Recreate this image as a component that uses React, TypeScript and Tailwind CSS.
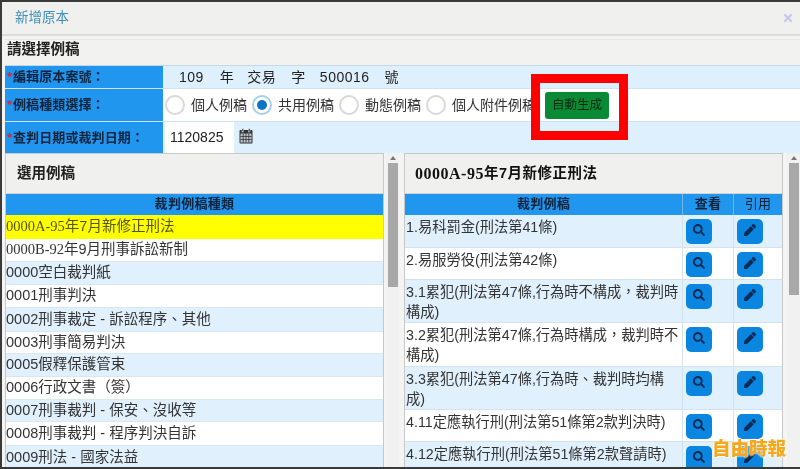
import { FaPen, FaSearch, FaTimes } from "react-icons/fa";

const sans = "font-['Liberation_Sans','Noto_Sans_CJK_TC',sans-serif]";
const serif = "font-['Liberation_Serif','Noto_Sans_CJK_TC',serif]";

const leftRows = [
  { code: "0000B-92", name: "年9月刑事訴訟新制", h: "h-[23px]", bg: "bg-white", isSerif: true },
  { code: "0000", name: "空白裁判紙", h: "h-[23px]", bg: "bg-[#e0f0fd]" },
  { code: "0001", name: "刑事判決", h: "h-[23px]", bg: "bg-white" },
  { code: "0002", name: "刑事裁定 - 訴訟程序、其他", h: "h-[24px]", bg: "bg-[#e0f0fd]" },
  { code: "0003", name: "刑事簡易判決", h: "h-[22px]", bg: "bg-white" },
  { code: "0005", name: "假釋保護管束", h: "h-[23px]", bg: "bg-[#e0f0fd]" },
  { code: "0006", name: "行政文書（簽）", h: "h-[23px]", bg: "bg-white" },
  { code: "0007", name: "刑事裁判 - 保安、沒收等", h: "h-[22px]", bg: "bg-[#e0f0fd]" },
  { code: "0008", name: "刑事裁判 - 程序判決自訴", h: "h-[24px]", bg: "bg-white" },
  { code: "0009", name: "刑法 - 國家法益", h: "h-[24px]", bg: "bg-[#e0f0fd]" },
];

const rightRows = [
  { text: "1.易科罰金(刑法第41條)", h: "h-[33px]", bg: "bg-[#e0f0fd]" },
  { text: "2.易服勞役(刑法第42條)", h: "h-[32px]", bg: "bg-white" },
  { text: "3.1累犯(刑法第47條,行為時不構成，裁判時構成)", h: "h-[43px]", bg: "bg-[#e0f0fd]" },
  { text: "3.2累犯(刑法第47條,行為時構成，裁判時不構成)", h: "h-[44px]", bg: "bg-white" },
  { text: "3.3累犯(刑法第47條,行為時、裁判時均構成)", h: "h-[43px]", bg: "bg-[#e0f0fd]" },
  { text: "4.11定應執行刑(刑法第51條第2款判決時)", h: "h-[32px]", bg: "bg-white" },
  { text: "4.12定應執行刑(刑法第51條第2款聲請時)", h: "h-[32px]", bg: "bg-[#e0f0fd]" },
];

function Radio({ label, checked }: { label: string; checked?: boolean }) {
  return (
    <label className="flex items-center gap-[6px]">
      <span
        className={`flex h-[20px] w-[20px] shrink-0 items-center justify-center rounded-full border-2 bg-white ${
          checked ? "border-[#a9cfe8]" : "border-[#d8d8d4]"
        }`}
      >
        {checked && <span className="h-[10px] w-[10px] rounded-full bg-[#0a74c4]" />}
      </span>
      <span className="whitespace-nowrap">{label}</span>
    </label>
  );
}

function Label({ text }: { text: string }) {
  return (
    <div className="flex w-[158px] shrink-0 items-center whitespace-nowrap bg-[#2196ee] pl-[2px] text-[13px] font-bold tracking-[0.1px] text-[#10233a]">
      <span className="w-[6px] text-[#e0203c]">*</span>
      {text}
    </div>
  );
}

function Scrollbar({ thumb }: { thumb: string }) {
  return (
    <div className="flex h-full w-[13px] shrink-0 flex-col items-center bg-[#f1f1f1] pt-[1px]">
      <span className="mt-[2px] h-0 w-0 border-x-[3px] border-b-[4px] border-x-transparent border-b-[#777]" />
      <div className={`mt-[3px] w-[10px] bg-[#a8a8a8] ${thumb}`} />
    </div>
  );
}

function IconButton({ children }: { children: React.ReactNode }) {
  return (
    <span className="flex h-[25px] w-[26px] items-center justify-center rounded-[5px] bg-[#0a86e0] pb-[3px] text-[12px] text-[#0b2a55]">
      {children}
    </span>
  );
}

function CalendarIcon() {
  return (
    <svg viewBox="0 0 14 16" className="ml-[5px] mt-[6px] h-[16px] w-[14px]" fill="none">
      <rect x="0.5" y="2" width="13" height="13.5" rx="1" fill="#333" />
      <rect x="3" y="0.5" width="1.6" height="3.5" fill="#333" stroke="#def0fd" strokeWidth="0.5" />
      <rect x="9.4" y="0.5" width="1.6" height="3.5" fill="#333" stroke="#def0fd" strokeWidth="0.5" />
      <path d="M1.5 5.5h11v9h-11z" fill="#b9c3ca" />
      <path d="M1.5 8.5h11M1.5 11.5h11M4.2 5.5v9M7 5.5v9M9.8 5.5v9" stroke="#333" strokeWidth="0.8" />
    </svg>
  );
}

export default function App() {
  return (
    <div className={`relative flex h-[469px] w-[800px] flex-col overflow-hidden border-t-2 border-b-2 border-l-2 border-[#3a3a3a] bg-[#f4f4f2] ${sans} blur-[0.4px]`}>
      {/* dialog title */}
      <div className="flex h-[34px] shrink-0 items-center justify-between border-b-2 border-[#dcdcd8] bg-[#f0f0ee] pr-[6px] pl-[13px]">
        <span className="text-[13.5px] text-[#3f8fb8]">新增原本</span>
        <FaTimes className="text-[12px] text-[#c9c6ee]" />
      </div>

      <div className="ml-[3px] mt-[3px] flex h-[26px] shrink-0 items-center border-t border-[#e6e6e2] bg-[#f2f2f0] pb-[6px] pl-[2px] text-[14.5px] font-bold text-[#222]">
        請選擇例稿
      </div>

      {/* form rows */}
      <div className="ml-[3px] shrink-0 text-[#333]">
        <div className="flex h-[23px] border-t border-[#c4d8e6] bg-[#def0fd]">
          <Label text="編輯原本案號：" />
          <div className="flex items-center pl-[16px] text-[14px] tracking-[0.5px] text-[#222]">
            <span>109</span>
            <span className="ml-[16px]">年</span>
            <span className="ml-[13px]">交易</span>
            <span className="ml-[15px]">字</span>
            <span className="ml-[14px]">500016</span>
            <span className="ml-[15px]">號</span>
          </div>
        </div>
        <div className="flex h-[34px] border-y border-[#cfe3f2] bg-white">
          <Label text="例稿種類選擇：" />
          <div className="flex items-center gap-[5px] pl-[2px] text-[14px]">
            <Radio label="個人例稿" />
            <Radio label="共用例稿" checked />
            <Radio label="動態例稿" />
            <Radio label="個人附件例稿" />
            <button className="ml-[4px] flex h-[27px] w-[64px] items-center justify-center rounded-[3px] bg-[#0a8a34] text-[12.5px] text-[#0a2a14]">
              自動生成
            </button>
          </div>
        </div>
        <div className="flex h-[31px] bg-[#def0fd]">
          <Label text="查判日期或裁判日期：" />
          <div className="ml-[2px] h-full w-[69px] bg-white pl-[5px] pt-[5px] text-[14px] text-[#222]">1120825</div>
          <CalendarIcon />
        </div>
      </div>

      {/* two panels */}
      <div className="flex min-h-0 flex-1 bg-[#f4f4f2] pl-[3px]">
        <div className="flex w-[379px] shrink-0 flex-col overflow-hidden border-x border-t border-[#c8c8c8]">
          <div className="flex h-[40px] shrink-0 items-center border-b border-[#d4d4d4] bg-[#f0f0ee] pl-[11px] text-[14.5px] font-bold text-[#222]">
            選用例稿
          </div>
          <div className="flex h-[21px] shrink-0 items-center justify-center bg-[#2196ee] pb-[2px] text-[13px] font-bold tracking-[0.3px] text-[#10233a]">
            裁判例稿種類
          </div>
          <div className="flex h-[24px] shrink-0 items-center bg-[#ffff00] text-[14.5px] text-[#555510]">
            <span className={serif}>0000A-95</span>年7月新修正刑法
          </div>
          {leftRows.map((r) => (
            <div key={r.code + r.name} className={`flex shrink-0 items-center border-b border-[#dce6ee] text-[14.5px] text-[#333] ${r.h} ${r.bg}`}>
              <span className={r.isSerif ? serif : ""}>{r.code}</span>
              {r.name}
            </div>
          ))}
        </div>
        <div className="ml-[2px]">
          <Scrollbar thumb="h-[124px]" />
        </div>

        <div className="ml-[5px] flex w-[379px] shrink-0 flex-col overflow-hidden border-x border-t border-[#c8c8c8]">
          <div className="flex h-[40px] shrink-0 items-center border-b border-[#d4d4d4] bg-[#f0f0ee] pl-[10px] text-[14.5px] font-bold tracking-[0.5px] text-[#111]">
            <span className={`${serif} text-[16px]`}>0000A-95</span>年7月新修正刑法
          </div>
          <div className="flex h-[21px] shrink-0 bg-[#2196ee] text-[13px] font-bold tracking-[0.3px] text-[#10233a]">
            <div className="flex w-[277px] items-center justify-center pb-[2px]">裁判例稿</div>
            <div className="flex w-[51px] items-center justify-center border-l border-[#72b8ea] pb-[2px]">查看</div>
            <div className="flex w-[49px] items-center justify-center border-l border-[#72b8ea] pb-[2px] font-normal">引用</div>
          </div>
          {rightRows.map((r) => (
            <div key={r.text} className={`flex shrink-0 border-b border-[#d4e2ec] text-[14.25px] leading-[20px] text-[#333] ${r.h} ${r.bg}`}>
              <div className="w-[277px] pl-[1px] pt-[2px]">{r.text}</div>
              <div className="flex w-[51px] border-l border-[#d4e2ec] pl-[3px] pt-[4px]">
                <IconButton>
                  <FaSearch />
                </IconButton>
              </div>
              <div className="flex w-[49px] border-l border-[#d4e2ec] pl-[3px] pt-[4px]">
                <IconButton>
                  <FaPen />
                </IconButton>
              </div>
            </div>
          ))}
        </div>
        <div className="ml-[4px]">
          <Scrollbar thumb="h-[132px]" />
        </div>
      </div>

      {/* red highlight box */}
      <div className="absolute left-[529px] top-[72px] h-[66px] w-[97px] border-[9px] border-[#ff0000]" />

      {/* newspaper watermark */}
      <div className="absolute left-[710px] top-[433px] text-[18.5px] font-black text-[#f5a81c] [text-shadow:0_0_2px_#fff,0_0_2px_#fff]">
        自由時報
      </div>
    </div>
  );
}
